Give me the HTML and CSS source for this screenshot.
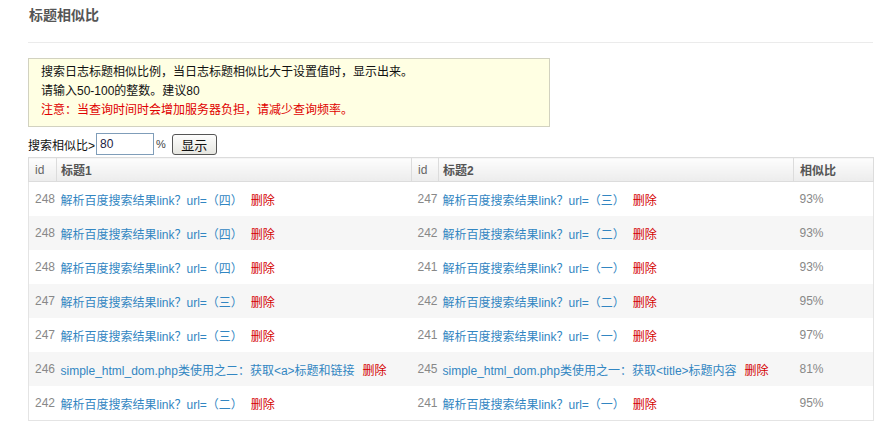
FILE: index.html
```html
<!DOCTYPE html>
<html lang="zh-CN">
<head>
<meta charset="utf-8">
<title>标题相似比</title>
<link rel="stylesheet" href="styles.css">
</head>
<body>
<div class="page">
  <h2 class="title">标题相似比</h2>
  <div class="notice">
    <p>搜索日志标题相似比例，当日志标题相似比大于设置值时，显示出来。</p>
    <p>请输入50-100的整数。建议80</p>
    <p class="warn">注意：当查询时间时会增加服务器负担，请减少查询频率。</p>
  </div>
  <form class="search">
    <label>搜索相似比&gt;</label><input class="num" type="text" value="80"><span class="pct">%</span><button class="btn" type="button">显示</button>
  </form>
  <table class="list">
    <colgroup>
      <col class="c-id"><col class="c-title"><col class="c-id2"><col class="c-title"><col class="c-ratio">
    </colgroup>
    <thead>
      <tr><th>id</th><th>标题1</th><th>id</th><th>标题2</th><th>相似比</th></tr>
    </thead>
    <tbody>
      <tr><td class="id">248</td><td><a class="lk" href="#">解析百度搜索结果link？url=（四）</a><a class="del" href="#">删除</a></td><td class="id">247</td><td><a class="lk" href="#">解析百度搜索结果link？url=（三）</a><a class="del" href="#">删除</a></td><td class="ratio">93%</td></tr>
      <tr><td class="id">248</td><td><a class="lk" href="#">解析百度搜索结果link？url=（四）</a><a class="del" href="#">删除</a></td><td class="id">242</td><td><a class="lk" href="#">解析百度搜索结果link？url=（二）</a><a class="del" href="#">删除</a></td><td class="ratio">93%</td></tr>
      <tr><td class="id">248</td><td><a class="lk" href="#">解析百度搜索结果link？url=（四）</a><a class="del" href="#">删除</a></td><td class="id">241</td><td><a class="lk" href="#">解析百度搜索结果link？url=（一）</a><a class="del" href="#">删除</a></td><td class="ratio">93%</td></tr>
      <tr><td class="id">247</td><td><a class="lk" href="#">解析百度搜索结果link？url=（三）</a><a class="del" href="#">删除</a></td><td class="id">242</td><td><a class="lk" href="#">解析百度搜索结果link？url=（二）</a><a class="del" href="#">删除</a></td><td class="ratio">95%</td></tr>
      <tr><td class="id">247</td><td><a class="lk" href="#">解析百度搜索结果link？url=（三）</a><a class="del" href="#">删除</a></td><td class="id">241</td><td><a class="lk" href="#">解析百度搜索结果link？url=（一）</a><a class="del" href="#">删除</a></td><td class="ratio">97%</td></tr>
      <tr><td class="id">246</td><td><a class="lk" href="#">simple_html_dom.php类使用之二：获取&lt;a&gt;标题和链接</a><a class="del" href="#">删除</a></td><td class="id">245</td><td><a class="lk" href="#">simple_html_dom.php类使用之一：获取&lt;title&gt;标题内容</a><a class="del" href="#">删除</a></td><td class="ratio">81%</td></tr>
      <tr><td class="id">242</td><td><a class="lk" href="#">解析百度搜索结果link？url=（二）</a><a class="del" href="#">删除</a></td><td class="id">241</td><td><a class="lk" href="#">解析百度搜索结果link？url=（一）</a><a class="del" href="#">删除</a></td><td class="ratio">95%</td></tr>
    </tbody>
  </table>
</div>
</body>
</html>
```
FILE: styles.css
```css
html, body {
  margin: 0;
  padding: 0;
  background: #fff;
}
body {
  font-family: "Liberation Sans", "Noto Sans CJK SC", sans-serif;
  font-size: 12px;
  color: #222;
}
.page {
  width: 845px;
  padding: 0 12px 0 28px;
}
.title {
  margin: 0;
  padding: 5px 0 17px 1px;
  font-size: 14px;
  line-height: 20px;
  font-weight: bold;
  color: #555;
  border-bottom: 1px solid #ebebeb;
}
.notice {
  margin-top: 15px;
  width: 496px;
  padding: 4px 12px 6px 12px;
  background: #ffffe3;
  border: 1px solid #d2d2c0;
}
.notice p {
  margin: 0;
  line-height: 19px;
  color: #111;
}
.notice .warn {
  color: #e00000;
}
.search {
  margin: 6px 0 2px 0;
  display: flex;
  align-items: center;
  height: 22px;
}
.search label {
  color: #111;
  margin-right: 1px;
}
.num {
  box-sizing: border-box;
  width: 58px;
  height: 22px;
  margin: 0;
  padding: 0 3px;
  border: 1px solid #7f9db9;
  font-family: "Liberation Sans", sans-serif;
  font-size: 12px;
  color: #224;
}
.pct {
  margin: 0 6px 0 2px;
  font-size: 11px;
  color: #444;
}
.btn {
  box-sizing: border-box;
  width: 45px;
  height: 21px;
  margin: 0;
  padding: 0;
  border: 1px solid #555;
  border-radius: 3px;
  background: linear-gradient(#fdfdfd, #e6e6e0);
  font-family: "Liberation Sans", "Noto Sans CJK SC", sans-serif;
  font-size: 13px;
  color: #111;
}
.list {
  width: 845px;
  table-layout: fixed;
  border-collapse: collapse;
  border: 1px solid #e4e4e4;
}
.c-id { width: 28px; }
.c-id2 { width: 27px; }
.c-title { width: 355px; }
.c-ratio { width: 80px; }
.list th {
  height: 23px;
  padding: 0 4px;
  text-align: left;
  font-weight: bold;
  color: #555;
  background: linear-gradient(#fdfdfd, #ececec);
  border: 1px solid #dcdcdc;
  white-space: nowrap;
}
.list th:first-child,
.list th:nth-child(3) {
  font-weight: normal;
  color: #666;
  padding-left: 6px;
}
.list th:last-child {
  padding-left: 6px;
}
.list td {
  height: 34px;
  padding: 0 4px;
  white-space: nowrap;
  overflow: hidden;
}
.list td.id {
  color: #888;
  padding-left: 6px;
  padding-right: 0;
}
.list td.ratio {
  color: #888;
  padding-left: 6px;
}
.list tbody tr:nth-child(even) td {
  background: #f6f6f6;
}
.lk {
  color: #3286c2;
  text-decoration: none;
}
.del {
  margin-left: 8px;
  color: #d40000;
  text-decoration: none;
}
```
